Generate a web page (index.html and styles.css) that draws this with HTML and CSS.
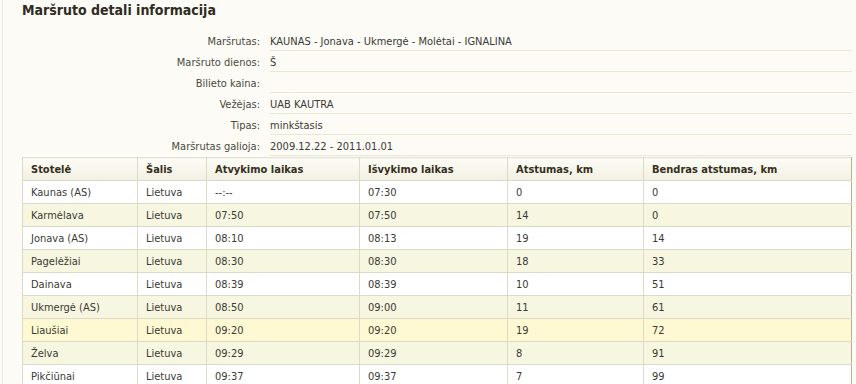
FILE: index.html
```html
<!DOCTYPE html>
<html lang="lt">
<head>
<meta charset="utf-8">
<title>Maršruto detali informacija</title>
<link rel="stylesheet" href="styles.css">
</head>
<body>
<div class="page">
  <h1 class="title">Maršruto detali informacija</h1>
  <div class="info">
    <div class="label">Maršrutas:</div><div class="value">KAUNAS - Jonava - Ukmergė - Molėtai - IGNALINA</div>
    <div class="label">Maršruto dienos:</div><div class="value">Š</div>
    <div class="label">Bilieto kaina:</div><div class="value"></div>
    <div class="label">Vežėjas:</div><div class="value">UAB KAUTRA</div>
    <div class="label">Tipas:</div><div class="value">minkštasis</div>
    <div class="label">Maršrutas galioja:</div><div class="value">2009.12.22 - 2011.01.01</div>
  </div>
  <table class="stops">
    <colgroup>
      <col class="c1"><col class="c2"><col class="c3"><col class="c4"><col class="c5"><col class="c6">
    </colgroup>
    <thead>
      <tr><th>Stotelė</th><th>Šalis</th><th>Atvykimo laikas</th><th>Išvykimo laikas</th><th>Atstumas, km</th><th>Bendras atstumas, km</th></tr>
    </thead>
    <tbody>
      <tr><td>Kaunas (AS)</td><td>Lietuva</td><td>--:--</td><td>07:30</td><td>0</td><td>0</td></tr>
      <tr class="alt"><td>Karmėlava</td><td>Lietuva</td><td>07:50</td><td>07:50</td><td>14</td><td>0</td></tr>
      <tr><td>Jonava (AS)</td><td>Lietuva</td><td>08:10</td><td>08:13</td><td>19</td><td>14</td></tr>
      <tr class="alt"><td>Pagelėžiai</td><td>Lietuva</td><td>08:30</td><td>08:30</td><td>18</td><td>33</td></tr>
      <tr><td>Dainava</td><td>Lietuva</td><td>08:39</td><td>08:39</td><td>10</td><td>51</td></tr>
      <tr class="alt"><td>Ukmergė (AS)</td><td>Lietuva</td><td>08:50</td><td>09:00</td><td>11</td><td>61</td></tr>
      <tr class="hover"><td>Liaušiai</td><td>Lietuva</td><td>09:20</td><td>09:20</td><td>19</td><td>72</td></tr>
      <tr class="alt"><td>Želva</td><td>Lietuva</td><td>09:29</td><td>09:29</td><td>8</td><td>91</td></tr>
      <tr><td>Pikčiūnai</td><td>Lietuva</td><td>09:37</td><td>09:37</td><td>7</td><td>99</td></tr>
    </tbody>
  </table>
</div>
</body>
</html>
```

FILE: styles.css
```css
html, body {
  margin: 0;
  padding: 0;
  background: #fcfbf6;
}
body {
  font-family: "DejaVu Sans Condensed", "DejaVu Sans", sans-serif;
  font-stretch: condensed;
  font-size: 11px;
  color: #3a3a34;
  overflow: hidden;
}
.page {
  margin-left: 2px;
  border-left: 1px solid #eeede4;
  padding: 0 0 0 19px;
  min-height: 384px;
  box-sizing: border-box;
}
.title {
  margin: 0;
  padding-top: 2px;
  height: 28px;
  font-size: 14px;
  font-weight: bold;
  line-height: 17px;
  color: #2f2b1f;
}
.info {
  display: grid;
  grid-template-columns: 238px 582px;
  column-gap: 10px;
  margin-right: 4px;
}
.label, .value {
  height: 21px;
  padding-top: 5px;
  box-sizing: border-box;
  line-height: 13px;
}
.label {
  text-align: right;
  color: #4a4a40;
}
.value {
  border-bottom: 1px solid #ebe8d2;
}
.stops {
  border-collapse: collapse;
  table-layout: fixed;
  width: 829px;
  margin-top: 1px;
}
.c1 { width: 115px; }
.c2 { width: 69px; }
.c3 { width: 153px; }
.c4 { width: 148px; }
.c5 { width: 136px; }
.c6 { width: 208px; }
.stops th, .stops td {
  border: 1px solid #dcd9c6;
  height: 23px;
  padding: 0 0 0 8px;
  box-sizing: border-box;
  text-align: left;
  white-space: nowrap;
  overflow: hidden;
}
.stops th {
  font-weight: bold;
  color: #352f1c;
  background: linear-gradient(#fdfcf6, #f2f0e1);
  border-top-color: #e3e1d3;
  padding-top: 1px;
}
.stops td {
  background: #ffffff;
  color: #3a3a34;
  padding-top: 1px;
}
.stops tr.alt td {
  background: #f7f6e0;
}
.stops tr.hover td {
  background: #fef9d3;
}
.stops th:last-child, .stops td:last-child {
  border-right: 1px solid #b4b190;
}
```
